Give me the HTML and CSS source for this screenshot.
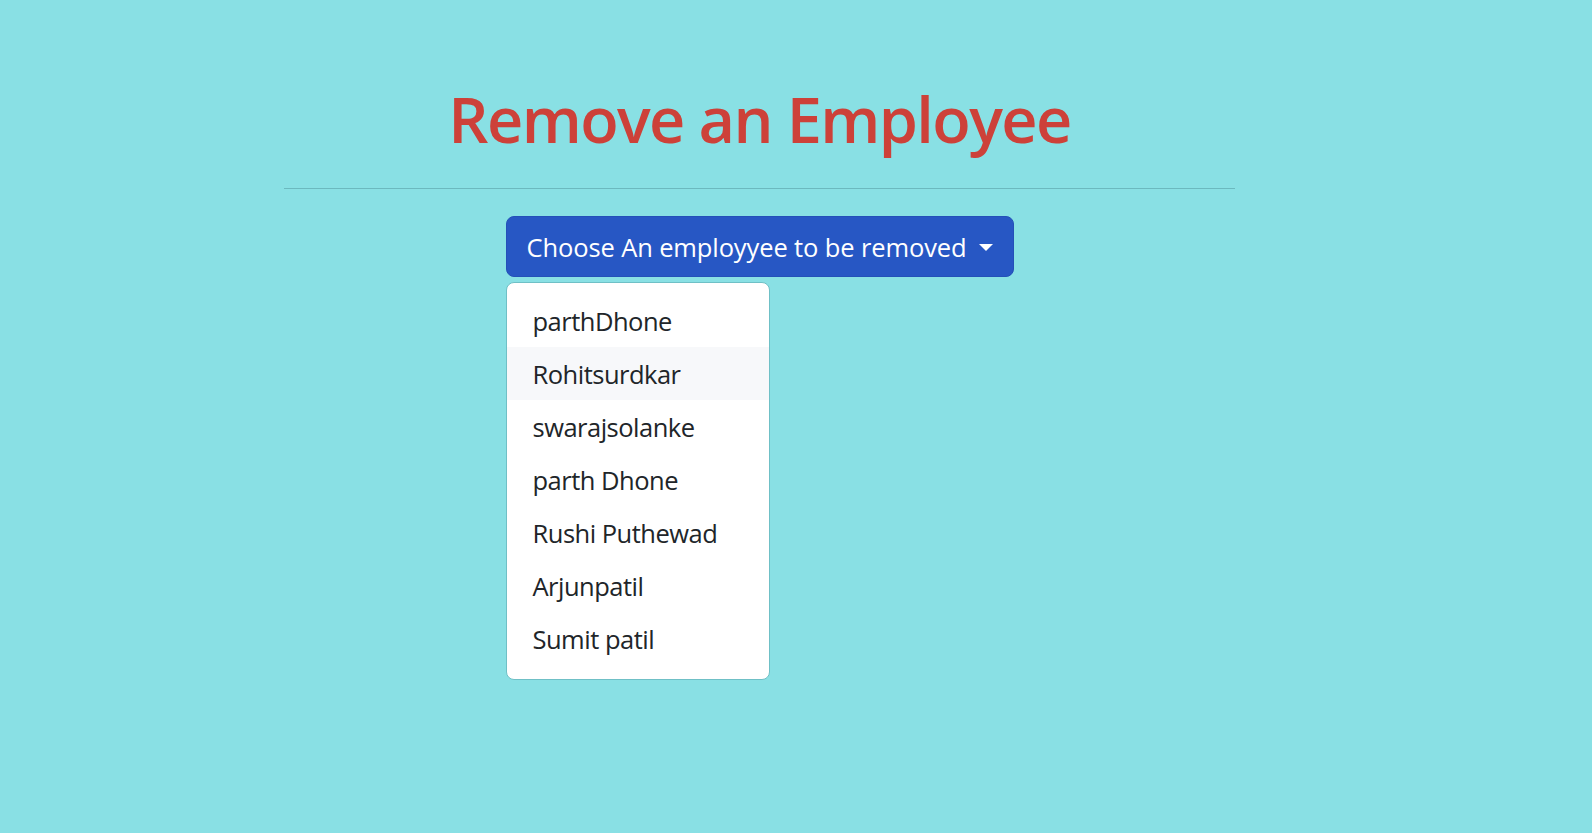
FILE: index.html
```html
<!DOCTYPE html>
<html>
<head>
<meta charset="utf-8">
<link rel="stylesheet" href="styles.css">
</head>
<body>
<main class="page">
  <h1 class="title">Remove an Employee</h1>
  <hr class="rule">
  <div class="dropdown">
    <button class="toggle">Choose An employyee to be removed<span class="caret"></span></button>
    <ul class="menu">
      <li class="item">parthDhone</li>
      <li class="item active">Rohitsurdkar</li>
      <li class="item">swarajsolanke</li>
      <li class="item">parth Dhone</li>
      <li class="item">Rushi Puthewad</li>
      <li class="item">Arjunpatil</li>
      <li class="item">Sumit patil</li>
    </ul>
  </div>
</main>
</body>
</html>
```

FILE: styles.css
```css
html, body {
  margin: 0;
  padding: 0;
  height: 100%;
}
body {
  background: #89e0e4;
  font-family: "Open Sans", "Noto Sans", sans-serif;
  color: #212529;
}
.page {
  width: 951px;
  margin-left: 284px;
  padding-top: 76px;
  display: flex;
  flex-direction: column;
  align-items: center;
}
.title {
  margin: 0;
  font-size: 63px;
  font-weight: 600;
  letter-spacing: -1.6px;
  line-height: 86px;
  color: #cd4139;
}
.rule {
  align-self: stretch;
  margin: 26px 0 0 0;
  border: 0;
  border-top: 1px solid #6cb9bf;
  height: 0;
}
.dropdown {
  margin-top: 27px;
  display: flex;
  flex-direction: column;
  align-items: flex-start;
}
.toggle {
  box-sizing: border-box;
  height: 61px;
  width: 508px;
  padding: 0 20px 0 20px;
  background: #2757c4;
  border: 1px solid #2450b8;
  border-radius: 8px;
  color: #fff;
  font-family: inherit;
  font-size: 25.5px;
  letter-spacing: -0.12px;
  white-space: nowrap;
  display: flex;
  align-items: center;
  justify-content: space-between;
}
.caret {
  width: 0;
  height: 0;
  border-left: 7px solid transparent;
  border-right: 7px solid transparent;
  border-top: 7px solid #fff;
  margin-top: 1px;
}
.menu {
  list-style: none;
  box-sizing: border-box;
  margin: 5px 0 0 0;
  padding: 11px 0 14px 0;
  width: 264px;
  background: #fff;
  border: 1px solid #6fc0c6;
  border-radius: 8px;
}
.item {
  height: 53px;
  display: flex;
  align-items: center;
  padding-left: 26px;
  font-size: 25.5px;
  letter-spacing: -0.5px;
  color: #212529;
}
.item.active {
  background: #f7f8fa;
}
```
